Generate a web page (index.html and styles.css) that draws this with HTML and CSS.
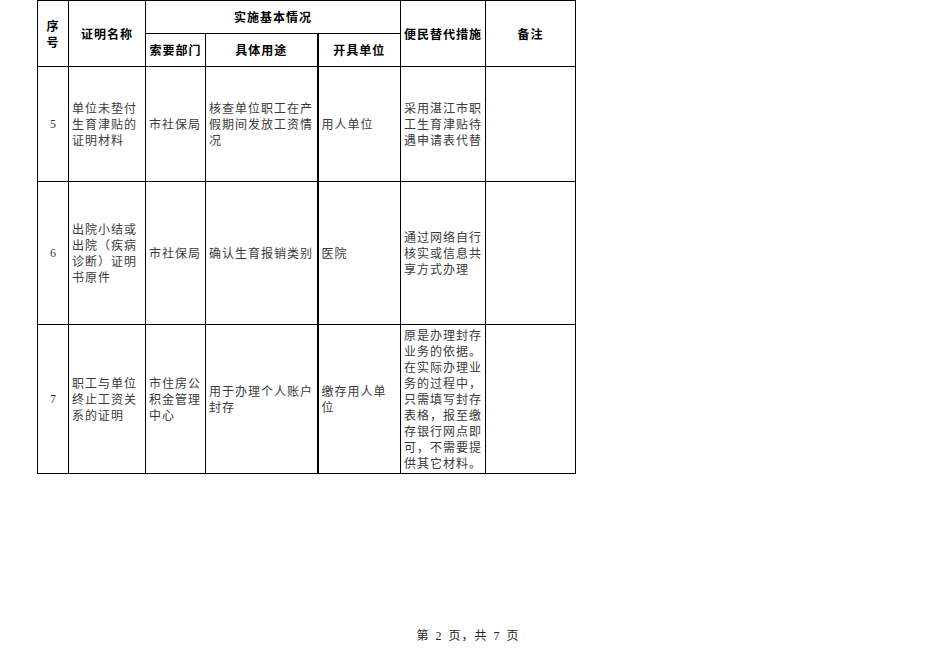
FILE: index.html
```html
<!DOCTYPE html>
<html lang="zh-CN">
<head>
<meta charset="utf-8">
<title>证明材料</title>
<link rel="stylesheet" href="styles.css">
</head>
<body>
<div class="page">
<table class="sheet">
  <colgroup>
    <col class="c1"><col class="c2"><col class="c3"><col class="c4"><col class="c5"><col class="c6"><col class="c7">
  </colgroup>
  <thead>
    <tr class="h1">
      <th rowspan="2" class="narrow">序号</th>
      <th rowspan="2">证明名称</th>
      <th colspan="3">实施基本情况</th>
      <th rowspan="2">便民替代措施</th>
      <th rowspan="2">备注</th>
    </tr>
    <tr class="h2">
      <th>索要部门</th>
      <th>具体用途</th>
      <th class="thick">开具单位</th>
    </tr>
  </thead>
  <tbody>
    <tr class="r5">
      <td class="num">5</td>
      <td>单位未垫付生育津贴的证明材料</td>
      <td>市社保局</td>
      <td>核查单位职工在产假期间发放工资情况</td>
      <td class="thick">用人单位</td>
      <td>采用湛江市职工生育津贴待遇申请表代替</td>
      <td></td>
    </tr>
    <tr class="r6">
      <td class="num">6</td>
      <td>出院小结或出院（疾病诊断）证明书原件</td>
      <td>市社保局</td>
      <td>确认生育报销类别</td>
      <td class="thick">医院</td>
      <td>通过网络自行核实或信息共享方式办理</td>
      <td></td>
    </tr>
    <tr class="r7">
      <td class="num">7</td>
      <td>职工与单位终止工资关系的证明</td>
      <td>市住房公积金管理中心</td>
      <td>用于办理个人账户封存</td>
      <td class="thick">缴存用人单位</td>
      <td>原是办理封存业务的依据。在实际办理业务的过程中，只需填写封存表格，报至缴存银行网点即可，不需要提供其它材料。</td>
      <td></td>
    </tr>
  </tbody>
</table>
<div class="footer">第 2 页，共 7 页</div>
</div>
</body>
</html>
```

FILE: styles.css
```css
html, body {
  margin: 0;
  padding: 0;
  background: #ffffff;
}
.page {
  width: 936px;
  height: 662px;
  display: flex;
  flex-direction: column;
}
.sheet {
  margin-left: 37px;
  border-collapse: collapse;
  table-layout: fixed;
  width: 539px;
  font-family: "Noto Sans CJK SC", "Liberation Serif", serif;
  font-size: 12px;
  line-height: 16px;
  letter-spacing: 1px;
}
.c1 { width: 31px; }
.c2 { width: 77px; }
.c3 { width: 60px; }
.c4 { width: 112px; }
.c5 { width: 83px; }
.c6 { width: 85px; }
.c7 { width: 90px; }
.sheet th,
.sheet td {
  border: 1px solid #000;
  padding: 0 2px 0 3px;
  vertical-align: middle;
  overflow: hidden;
}
.sheet th {
  font-weight: bold;
  color: #000;
  text-align: center;
  padding: 0 1px;
}
.sheet td {
  color: #3a3a3a;
  text-align: left;
  word-break: break-all;
}
.sheet .narrow {
  padding: 0 8px;
}
.sheet .thick {
  border-left: 2px solid #000;
}
.sheet td.num {
  text-align: center;
  padding: 0;
  font-family: "Liberation Serif", serif;
  letter-spacing: 0;
}
.h1 { height: 33px; }
.h2 { height: 33px; }
.r5 { height: 115px; }
.r6 { height: 143px; }
.r7 { height: 149px; }
.footer {
  margin-top: auto;
  margin-bottom: 18px;
  text-align: center;
  font-family: "Liberation Serif", "Noto Sans CJK SC", serif;
  font-size: 12px;
  line-height: 16px;
  color: #222;
  letter-spacing: 1px;
  word-spacing: 2px;
}
```
